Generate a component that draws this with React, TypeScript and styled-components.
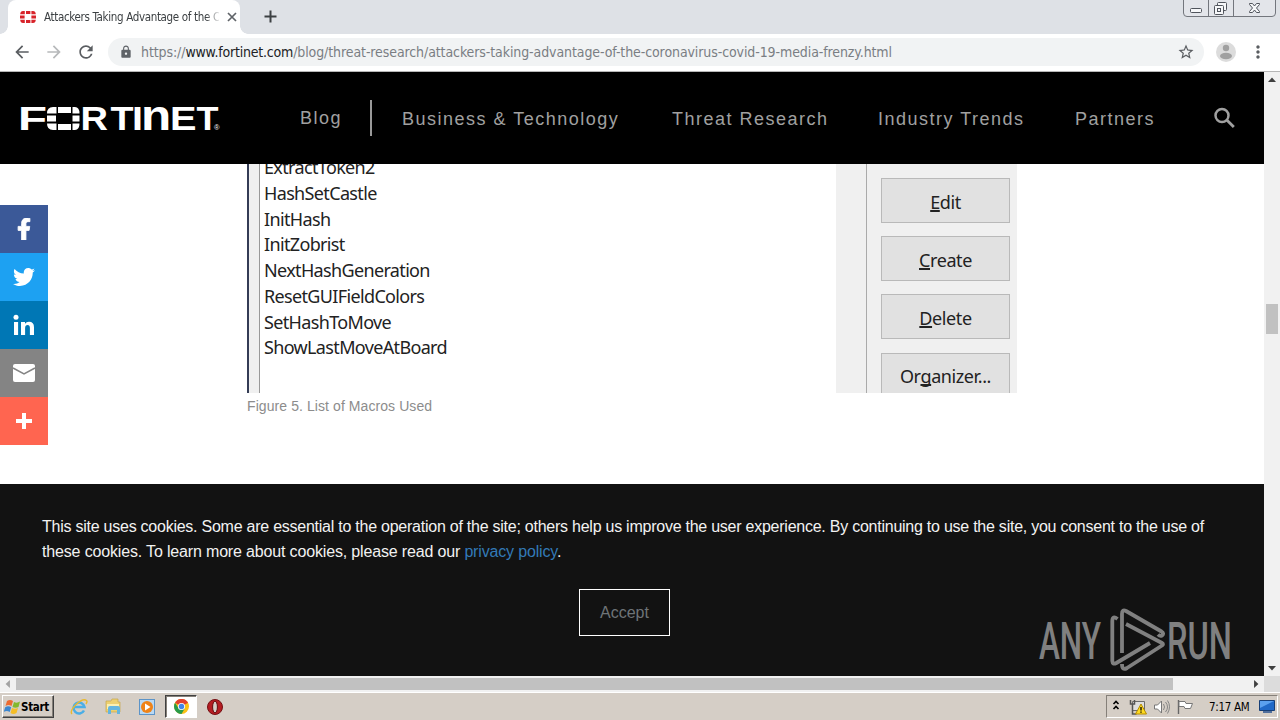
import styled, { createGlobalStyle, css } from 'styled-components';
import { FaFacebookF, FaTwitter } from 'react-icons/fa';
import { MdArrowBack, MdArrowForward, MdLock, MdMoreVert, MdRefresh, MdStarBorder } from 'react-icons/md';

const macros = [
  'ExtractToken2',
  'HashSetCastle',
  'InitHash',
  'InitZobrist',
  'NextHashGeneration',
  'ResetGUIFieldColors',
  'SetHashToMove',
  'ShowLastMoveAtBoard',
];

const dialogButtons = [
  { before: '', key: 'E', after: 'dit' },
  { before: '', key: 'C', after: 'reate' },
  { before: '', key: 'D', after: 'elete' },
  { before: 'Or', key: 'g', after: 'anizer...' },
];

const App = () => {
  return (
    <>
      <GlobalStyle />
      <Screen>
        <TabStrip>
          <Tab>
            <Favicon />
            <TabTitle>Attackers Taking Advantage of the C</TabTitle>
            <svg width="10" height="10" viewBox="0 0 10 10">
              <path d="M1 1 9 9M9 1 1 9" stroke="#5f6368" strokeWidth="1.7" />
            </svg>
          </Tab>
          <NewTab width="13" height="13" viewBox="0 0 13 13">
            <path d="M6.5 0.5V12.5M.5 6.5H12.5" stroke="#3c4043" strokeWidth="2" />
          </NewTab>
          <WindowControls />
        </TabStrip>

        <Toolbar>
          <MdArrowBack size={20} color="#5a5d61" />
          <MdArrowForward size={20} color="#b7b9bb" />
          <MdRefresh size={20} color="#5a5d61" />
          <AddressBar>
            <MdLock size={14} color="#5f6368" />
            <Url>
              https://<b>www.fortinet.com</b>/blog/threat-research/attackers-taking-advantage-of-the-coronavirus-covid-19-media-frenzy.html
            </Url>
            <MdStarBorder size={18} color="#5a5d61" />
          </AddressBar>
          <Avatar />
          <MdMoreVert size={20} color="#5a5d61" />
        </Toolbar>

        <Viewport>
          <Page>
            <SiteHeader>
              <FortinetLogo />
              <NavItem $lift>Blog</NavItem>
              <NavDivider />
              <NavItem>Business &amp; Technology</NavItem>
              <NavItem>Threat Research</NavItem>
              <NavItem>Industry Trends</NavItem>
              <NavItem>Partners</NavItem>
              <svg width="22" height="22" viewBox="0 0 22 22" fill="none" stroke="#a0a0a0">
                <circle cx="8" cy="8.5" r="6.5" strokeWidth="2.5" />
                <path d="m12.800 13 7 7" strokeWidth="2.800" />
              </svg>
            </SiteHeader>

            <Article>
              <ShareBar>
                <Share $color="#3b5998"><FaFacebookF size={22} stroke="#fff" strokeWidth={20} /></Share>
                <Share $color="#1da1f2"><FaTwitter size={22} /></Share>
                <Share $color="#0077b5">
                  <svg width="22" height="22" viewBox="0 0 22 22" fill="#fff">
                    <circle cx="3" cy="3.300" r="2.500" />
                    <path d="M1 8h4.100v13H1zM8 8h4v1.800q1.300-2.100 4-2.100 5 0 5 5.500V21h-4.100v-7q0-3-2.300-3-2.500 0-2.500 3v7H8z" />
                  </svg>
                </Share>
                <Share $color="#848484">
                  <svg width="24" height="20" viewBox="0 0 24 20">
                    <rect x="1" y="1" width="22" height="18" rx="2" fill="#fff" />
                    <path d="m1 5 11 6L23 5" fill="none" stroke="#848484" strokeWidth="1.500" />
                  </svg>
                </Share>
                <Share $color="#ff6550">
                  <svg width="16" height="16" viewBox="0 0 16 16">
                    <path d="M8 0V16M0 8H16" stroke="#fff" strokeWidth="4" />
                  </svg>
                </Share>
              </ShareBar>
              <Figure>
                <MacroDialog>
                  <DialogEdge />
                  <MacroList>
                    {macros.map(name => <li key={name}>{name}</li>)}
                  </MacroList>
                  <DialogSide>
                    <DialogActions>
                      {dialogButtons.map(item => (
                        <DialogButton key={item.after}>
                          <span>{item.before}<u>{item.key}</u>{item.after}</span>
                        </DialogButton>
                      ))}
                    </DialogActions>
                  </DialogSide>
                </MacroDialog>
                <Caption>Figure 5. List of Macros Used</Caption>
              </Figure>
            </Article>

            <CookieBanner>
              <CookieText $spacing={-0.245}>
                This site uses cookies. Some are essential to the operation of the site; others help us improve the user experience. By continuing to use the site, you consent to the use of
              </CookieText>
              <CookieText $spacing={-0.16}>
                these cookies. To learn more about cookies, please read our <a>privacy policy</a>.
              </CookieText>
              <AcceptButton>Accept</AcceptButton>
              <Watermark />
            </CookieBanner>
          </Page>

          <VerticalScroll>
            <Arrow $dir="up" />
            <VerticalThumb />
            <Arrow $dir="down" />
          </VerticalScroll>
        </Viewport>

        <HorizontalScroll>
          <Arrow $dir="left" $faded />
          <HorizontalThumb />
          <Arrow $dir="right" />
          <ScrollCorner />
        </HorizontalScroll>

        <Taskbar>
          <StartButton>
            <WindowsFlag />
            Start
          </StartButton>
          <QuickLaunch>
            <TaskSlot><ExplorerIcon /></TaskSlot>
            <TaskSlot><FolderIcon /></TaskSlot>
            <TaskSlot><PlayerIcon /></TaskSlot>
            <TaskSlot $active><ChromeIcon /></TaskSlot>
            <TaskSlot><OperaIcon /></TaskSlot>
          </QuickLaunch>
          <Tray>
            <TrayIcons />
            <Clock>7:17 AM</Clock>
            <DesktopIcon />
          </Tray>
        </Taskbar>
      </Screen>
    </>
  );
};

const Favicon = () => (
  <svg width="16" height="12" viewBox="0 0 16 12" fill="#d8232a">
    <path d="M6 0h4.4v3H6zM6 9h4.4v3H6zM0 4.6h4.6v2.8H0zM11.4 4.6H16v2.8h-4.6zM4.8 0v3.2H.2Q.5 0 3 0zM11.4 0v3.2h4.4Q15.500 0 13 0zM4.800 12V8.800H.2Q.5 12 3 12zM11.4 12V8.800h4.400Q15.500 12 13 12z" />
  </svg>
);

const WindowControls = () => (
  <Controls width="94" height="17" viewBox="0 0 94 17" fill="none" stroke="#73767d">
    <path d="M.5 0V13q0 3.500 3.500 3.500H89q3.500 0 3.500-3.500V0" fill="#e3e5ea" />
    <path d="M25.500 0V16M50.500 0V16" />
    <g stroke="#50545c" fill="#f6f7f9">
      <rect x="7.500" y="8.500" width="11" height="4" rx="1" />
      <rect x="34.500" y="2.500" width="9" height="8" rx="1" />
      <rect x="31.500" y="5.500" width="9" height="9" rx="1" />
      <rect x="34.500" y="8.500" width="3" height="3" />
      <path d="M66.500 3.500h3l2 2.500 2-2.500h3v1l-3 3.500 3 3.500v1h-3l-2-2.500-2 2.500h-3v-1l3-3.500-3-3.500z" />
    </g>
  </Controls>
);

const Avatar = () => (
  <svg width="20" height="20" viewBox="0 0 20 20">
    <circle cx="10" cy="10" r="10" fill="#dcdcdc" />
    <circle cx="10" cy="6" r="3.200" fill="#a0a0a0" />
    <ellipse cx="10" cy="14" rx="6" ry="3.200" fill="#a0a0a0" />
  </svg>
);

const wordmark = [
  { char: 'F', x: 4, width: 29 },
  { char: 'R', x: 66.5, width: 27.5 },
  { char: 'T', x: 96.5, width: 23 },
  { char: 'I', x: 118, width: 11 },
  { char: 'E', x: 156, width: 26.5 },
  { char: 'T', x: 182.5, width: 22 },
];

const FortinetLogo = () => (
  <Logo width="210" height="52" viewBox="0 -12 210 52" fill="#fff">
    <g fontFamily="'Liberation Sans', sans-serif" fontWeight="700" fontSize="33">
      {wordmark.map(({ char, x, width }) => (
        <text key={x} x={x} y="25" textLength={width} lengthAdjust="spacingAndGlyphs">{char}</text>
      ))}
      <text transform="translate(127 25) scale(1.5 1.27)">n</text>
    </g>
    <path d="M44 2h13v6H44zM44 19h13v6H44zM33 10.500h9v6h-9zM58.500 10.500h7v6h-7zM42.500 2v6.500H33Q33 2 39 2zM58.500 2v6.500h7Q65.500 2 61 2zM42.500 25v-6.500H33Q33 25 39 25zM58.500 25v-6.500h7Q65.500 25 61 25z" />
    <text x="200" y="25" fontFamily="'Liberation Sans', sans-serif" fontSize="7.5">®</text>
  </Logo>
);

const Watermark = () => (
  <WatermarkSvg width="200" height="68" viewBox="0 0 200 68" fill="#808080">
    <g fontFamily="Roboto, 'Liberation Sans', sans-serif" fontSize="52" fontWeight="500">
      <text x="1" y="50.500" textLength="62" lengthAdjust="spacingAndGlyphs">ANY</text>
      <text x="129" y="50.500" textLength="65" lengthAdjust="spacingAndGlyphs">RUN</text>
    </g>
    <g fill="none" stroke="#808080" strokeWidth="3.800" strokeLinejoin="round">
      <path d="M79.500 11q-5-4-5.200 2v40q.2 4 4 2L112 35" />
      <path d="M84 45V6q0-5 4-3l35.500 20.500q3 2 .5 4-2 1-4-1" />
      <path d="m88 16 36 19q2 1 0 2.500L89 60q-5 3-5-4" />
    </g>
  </WatermarkSvg>
);

const WindowsFlag = () => (
  <svg width="17" height="16" viewBox="0 0 17 16">
    <path d="M3 2q3-2 6 0L7.500 7q-3-2-6 0z" fill="#ec6a30" />
    <path d="M10 3q3 1.500 6-.5L14.500 8q-3 1.500-6 0z" fill="#83b82c" />
    <path d="M1.200 8.200q3-2 6 0L5.700 13q-3-2-6 0z" fill="#3b86cf" />
    <path d="M8 9q3 1.500 6 0l-1.500 5q-3 2-6 0z" fill="#f5bd26" />
  </svg>
);

const ExplorerIcon = () => (
  <svg width="18" height="18" viewBox="0 0 18 18" fill="none">
    <path d="M14 12.500A5.500 5.500 0 1 1 14.500 9H5" stroke="#4aaee6" strokeWidth="2.500" />
    <path d="M2 16C-2 12 12-1 16.500 2.500q1.200 1-.5 3.500" stroke="#e9b92f" strokeWidth="1.400" />
  </svg>
);

const FolderIcon = () => (
  <svg width="18" height="17" viewBox="0 0 18 17">
    <path d="M2 3h5l1-2h6v3h2v10H2z" fill="#ecd071" stroke="#c7a84c" strokeWidth=".7" />
    <path d="M3 6h12v5H3z" fill="#fbefb1" />
    <path d="M4 16V10q0-2 2-2h8q2 0 2 2v6h-3v-4H7v4z" fill="#64b5df" />
  </svg>
);

const PlayerIcon = () => (
  <svg width="16" height="16" viewBox="0 0 16 16">
    <rect x=".5" y=".5" width="15" height="15" fill="#b9d9f4" stroke="#5c94c8" />
    <circle cx="8" cy="8" r="6" fill="#ef8318" />
    <path d="m6 4.500 5.500 3.500L6 11.500z" fill="#fff" />
  </svg>
);

const ChromeIcon = () => (
  <svg width="15" height="15" viewBox="0 0 16 16">
    <circle cx="8" cy="8" r="8" fill="#fbc116" />
    <path d="M8 8 1.100 4A8 8 0 0 1 15 4z" fill="#e3412f" />
    <path d="M1.100 4A8 8 0 0 0 8 16l3.500-6H5z" fill="#299b4b" />
    <circle cx="8" cy="8" r="3.800" fill="#fff" />
    <circle cx="8" cy="8" r="2.900" fill="#4285e8" />
  </svg>
);

const OperaIcon = () => (
  <svg width="16" height="16" viewBox="0 0 16 16">
    <circle cx="8" cy="8" r="7.500" fill="#b51d22" stroke="#741013" />
    <ellipse cx="8" cy="8" rx="2.400" ry="5.800" fill="#d6cfc8" stroke="#610b0f" />
  </svg>
);

const TrayIcons = () => (
  <svg width="84" height="18" viewBox="0 0 84 18" fill="none">
    <path d="m1.500 6 2.500-2.500L6.500 6M1.500 11 4 8.500 6.500 11" stroke="#000" strokeWidth="1.600" />
    <path d="M20.500 3.500h12v9h-12z" fill="#dedede" stroke="#6b6b6b" />
    <path d="M18.500 2v4h4V2M20.500 6v10h4" stroke="#555" strokeWidth="1.500" />
    <path d="m29 6 5.500 10h-11z" fill="#ffdb20" stroke="#b58b00" />
    <path d="M29 9v3.500M29 13.500v1.200" stroke="#000" strokeWidth="1.300" />
    <path d="M42.500 7h3l4-4v12l-4-4h-3z" fill="#fff" stroke="#777" />
    <path d="M51.500 6q2 3 0 6M53.500 4q4 5 0 10M55.500 2.500q4 6 0 13" stroke="#858585" />
    <path d="M66.500 2v14" stroke="#666" strokeWidth="1.400" />
    <path d="M67 3.500h6l1 2h6.500l-2 5H73l-1-2h-5z" fill="#fff" stroke="#777" />
  </svg>
);

const DesktopIcon = () => (
  <svg width="16" height="15" viewBox="0 0 16 15">
    <path d="M.5 1.500h15v10H.5z" fill="#2169c7" stroke="#173f77" />
    <path d="M1 2h14L1 9z" fill="#5ba0ee" />
    <path d="M4 13h9" stroke="#254f8f" strokeWidth="1.500" />
  </svg>
);

const GlobalStyle = createGlobalStyle`
  * {
    box-sizing: border-box;
  }

  body {
    margin: 0;
    overflow: hidden;
    font-family: "Liberation Sans", Arial, sans-serif;
  }

  svg {
    display: block;
    flex-shrink: 0;
  }
`;

const Screen = styled.div`
  width: 1280px;
  height: 720px;
  display: flex;
  flex-direction: column;
  overflow: hidden;
  background: #fff;
`;

const TabStrip = styled.div`
  height: 34px;
  display: flex;
  align-items: flex-start;
  padding-left: 8px;
  background: #dee1e6;
`;

const Tab = styled.div`
  position: relative;
  width: 232px;
  height: 34px;
  padding: 0 3px 0 12px;
  display: flex;
  align-items: center;
  border-radius: 8px 8px 0 0;
  background: #fff;

  &::before, &::after {
    content: "";
    position: absolute;
    bottom: 0;
    width: 8px;
    height: 8px;
  }

  &::before {
    left: -8px;
    background: radial-gradient(circle at 0 0, transparent 7.5px, #fff 8px);
  }

  &::after {
    right: -8px;
    background: radial-gradient(circle at 100% 0, transparent 7.5px, #fff 8px);
  }

  > svg:last-child {
    margin-left: 8px;
  }
`;

const TabTitle = styled.span`
  width: 175px;
  margin-left: 8px;
  overflow: hidden;
  white-space: nowrap;
  font: 11.5px "DejaVu Sans Condensed", "DejaVu Sans", sans-serif;
  font-stretch: condensed;
  letter-spacing: -0.34px;
  color: #3c4043;
  mask-image: linear-gradient(90deg, #000 162px, transparent 177px);
`;

const NewTab = styled.svg`
  margin: 10px 0 0 24px;
`;

const Controls = styled.svg`
  margin: 0 3px 0 auto;
`;

const Toolbar = styled.div`
  height: 38px;
  padding: 0 12px 2px;
  display: flex;
  align-items: center;
  gap: 12px;
  border-bottom: 1px solid #b6b6b6;
`;

const AddressBar = styled.div`
  width: 1096px;
  height: 28px;
  padding: 0 9px 0 11px;
  display: flex;
  align-items: center;
  border-radius: 14px;
  background: #f1f3f4;
`;

const Url = styled.span`
  flex: 1;
  margin-left: 8px;
  white-space: nowrap;
  font: 14px "DejaVu Sans Condensed", "DejaVu Sans", sans-serif;
  font-stretch: condensed;
  letter-spacing: -0.095px;
  color: #7a7e83;

  b {
    font-weight: 400;
    letter-spacing: -0.2px;
    color: #202124;
  }
`;

const Viewport = styled.div`
  height: 604px;
  display: flex;
`;

const Page = styled.main`
  width: 1264px;
`;

const SiteHeader = styled.header`
  height: 92px;
  padding-left: 14px;
  display: grid;
  grid-template-columns: 286px 70px 32px 270px 206px 197px 139px 22px;
  align-items: center;
  background: #000;
`;

const Logo = styled.svg`
  margin-top: 1px;
`;

const NavItem = styled.span<{ $lift?: boolean }>`
  padding-top: ${p => p.$lift ? 0 : 2}px;
  font-size: 18px;
  line-height: 22px;
  letter-spacing: 1.5px;
  white-space: nowrap;
  color: #a0a0a0;
`;

const NavDivider = styled.i`
  width: 2px;
  height: 36px;
  background: #999;
`;

const Article = styled.section`
  height: 320px;
  display: flex;
`;

const ShareBar = styled.aside`
  width: 48px;
  margin: 41px 199px 0 0;
`;

const Share = styled.div<{ $color: string }>`
  height: 48px;
  display: grid;
  place-items: center;
  color: #fff;
  background: ${p => p.$color};
`;

const Figure = styled.figure`
  width: 770px;
  margin: 0;
`;

const MacroDialog = styled.div`
  height: 229px;
  display: flex;
  overflow: hidden;
  font-family: "Noto Sans", "Open Sans", sans-serif;
  font-size: 18px;
  color: #222;
`;

const DialogEdge = styled.div`
  width: 13px;
  border-left: 2px solid #343c55;
  border-right: 1px solid #999;
  background: #f0f0f0;
`;

const MacroList = styled.ul`
  width: 576px;
  margin: -9px 0 0;
  padding: 0 0 0 4px;
  list-style: none;
  letter-spacing: -0.65px;
  line-height: 25.75px;
`;

const DialogSide = styled.div`
  width: 181px;
  padding-left: 30px;
  background: #f0f0f0;
`;

const DialogActions = styled.div`
  padding: 14px 0 0 14px;
  display: grid;
  grid-auto-rows: 45px;
  row-gap: 13.2px;
  border-left: 1px solid #aaa;
`;

const DialogButton = styled.div`
  width: 129px;
  display: grid;
  place-items: center;
  padding-top: 2px;
  border: 1px solid #b9b9b9;
  background: #e1e1e1;
  letter-spacing: -0.4px;

  u {
    text-decoration-thickness: 2px;
    text-underline-offset: 1px;
    text-decoration-skip-ink: none;
  }
`;

const Caption = styled.figcaption`
  margin-top: 4px;
  font-size: 14px;
  line-height: 18px;
  letter-spacing: 0.08px;
  color: #8c8c8c;
`;

const CookieBanner = styled.section`
  position: relative;
  height: 192px;
  padding: 30px 42px 0;
  background: #121212;
`;

const CookieText = styled.p<{ $spacing: number }>`
  margin: 0;
  font-size: 16px;
  line-height: 25px;
  letter-spacing: ${p => p.$spacing}px;
  white-space: nowrap;
  color: #f2f2f2;

  a {
    color: #337ab7;
  }
`;

const AcceptButton = styled.button`
  display: block;
  width: 91px;
  height: 47px;
  margin: 25px 0 0 537px;
  padding: 0;
  border: 1px solid #fff;
  background: none;
  font: 16px "Liberation Sans", sans-serif;
  color: #6e7478;
`;

const WatermarkSvg = styled.svg`
  position: absolute;
  left: 1038px;
  top: 124px;
`;

const VerticalScroll = styled.div`
  width: 16px;
  display: flex;
  flex-direction: column;
  align-items: center;
  background: #f1f1f1;
`;

const VerticalThumb = styled.div`
  width: 12px;
  height: 30px;
  margin: 216px 0 auto;
  background: #c1c1c1;
`;

const arrows = {
  up: '50% 35%, 75% 62%, 25% 62%',
  down: '25% 38%, 75% 38%, 50% 65%',
  left: '35% 50%, 62% 25%, 62% 75%',
  right: '38% 25%, 65% 50%, 38% 75%',
};

const Arrow = styled.i<{ $dir: keyof typeof arrows; $faded?: boolean }>`
  width: 16px;
  height: 16px;
  flex-shrink: 0;
  background: ${p => p.$faded ? '#a3a3a3' : '#404040'};
  clip-path: polygon(${p => arrows[p.$dir]});
`;

const HorizontalScroll = styled.div`
  height: 16px;
  display: flex;
  align-items: center;
  background: #f1f1f1;
`;

const HorizontalThumb = styled.div`
  width: 1157px;
  height: 12px;
  margin-right: auto;
  background: #c1c1c1;
`;

const ScrollCorner = styled.div`
  width: 16px;
  height: 16px;
  background: #dcdcdc;
`;

const Taskbar = styled.footer`
  height: 28px;
  padding: 2px 2px 0;
  display: flex;
  border-top: 1px solid #fff;
  background: #d5cec6;
  font-family: "DejaVu Sans Condensed", "DejaVu Sans", sans-serif;
  font-size: 11.5px;
  font-stretch: condensed;
`;

const sunken = css`
  border: 1px solid;
  border-color: #858079 #fff #fff #858079;
`;

const StartButton = styled.div`
  width: 52px;
  height: 23px;
  padding-left: 1px;
  display: flex;
  align-items: center;
  border: 1px solid;
  border-color: #fff #404040 #404040 #fff;
  box-shadow: inset -1px -1px #858079;
  font-weight: 700;
  letter-spacing: -0.3px;
`;

const QuickLaunch = styled.div`
  margin-left: 9px;
  display: flex;
  gap: 2px;
`;

const TaskSlot = styled.div<{ $active?: boolean }>`
  width: 32px;
  height: 23px;
  display: grid;
  place-items: center;

  ${p => p.$active && css`
    background: #fff;
    border: 1px solid;
    border-color: #404040 #fff #fff #404040;
    box-shadow: inset 1px 1px #858079;
  `}
`;

const Tray = styled.div`
  width: 172px;
  height: 23px;
  margin-left: auto;
  padding-left: 5px;
  display: flex;
  align-items: center;
  ${sunken}
`;

const Clock = styled.span`
  width: 50px;
  margin-left: 13px;
  letter-spacing: -0.3px;
  white-space: nowrap;
`;

export default App;
